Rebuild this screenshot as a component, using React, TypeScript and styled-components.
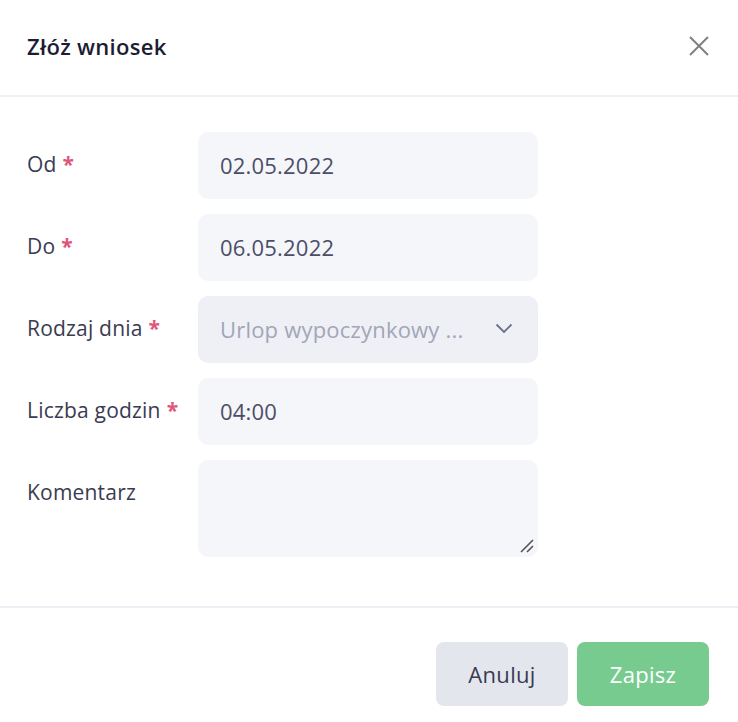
import React from "react";
import styled, { createGlobalStyle } from "styled-components";

const Global = createGlobalStyle`
  html, body { margin: 0; padding: 0; background: #ffffff; }
  body { font-family: "Open Sans", "Noto Sans", sans-serif; }
  * { box-sizing: border-box; }
`;

const Modal = styled.div`
  width: 738px;
  background: #fff;
  display: flex;
  flex-direction: column;
`;

const Header = styled.div`
  height: 97px;
  padding: 0 28px 4px 27px;
  display: flex;
  align-items: center;
  justify-content: space-between;
  border-bottom: 2px solid #eeeff4;
`;

const Title = styled.h2`
  margin: 0;
  font-size: 22px;
  font-weight: 600;
  color: #1c1d33;
  letter-spacing: 0.3px;
`;

const CloseButton = styled.button`
  border: 0;
  background: none;
  padding: 0;
  width: 22px;
  height: 22px;
  display: flex;
  align-items: center;
  justify-content: center;
  cursor: pointer;
`;

const Body = styled.div`
  padding: 35px 0 49px 27px;
  display: flex;
  flex-direction: column;
  gap: 15px;
`;

const Row = styled.div`
  display: grid;
  grid-template-columns: 171px 340px;
  align-items: start;
`;

const Label = styled.label`
  padding-top: 19px;
  font-size: 21px;
  line-height: 26px;
  color: #3a3b52;
  font-weight: 500;
  letter-spacing: 0.2px;
  white-space: nowrap;
`;

const Req = styled.span`
  color: #e0567a;
  margin-left: 6px;
  font-weight: 700;
`;

const Field = styled.div<{ $muted?: boolean; $tall?: boolean }>`
  height: ${(p) => (p.$tall ? "97px" : "67px")};
  border-radius: 10px;
  background: ${(p) => (p.$muted ? "#eef0f5" : "#f5f6f9")};
  display: flex;
  align-items: ${(p) => (p.$tall ? "flex-end" : "center")};
  justify-content: space-between;
  padding: ${(p) => (p.$tall ? "0 4px 4px 22px" : "0 25px 2px 22px")};
  font-size: 22px;
  letter-spacing: 0.2px;
  color: ${(p) => (p.$muted ? "#a3a5b8" : "#4c4e68")};
  white-space: nowrap;
`;

const Footer = styled.div`
  border-top: 2px solid #eeeff4;
  padding: 34px 29px 36px;
  display: flex;
  justify-content: flex-end;
  gap: 9px;
`;

const Button = styled.button<{ $primary?: boolean }>`
  width: 132px;
  height: 64px;
  border: 0;
  border-radius: 8px;
  font-family: inherit;
  font-size: 22px;
  font-weight: 500;
  letter-spacing: 0.3px;
  background: ${(p) => (p.$primary ? "#78cb8f" : "#e4e6ee")};
  color: ${(p) => (p.$primary ? "#ffffff" : "#3a3b52")};
`;

const rows: { label: string; value: string; required: boolean }[] = [
  { label: "Od", value: "02.05.2022", required: true },
  { label: "Do", value: "06.05.2022", required: true },
];

export default function App() {
  return (
    <>
      <Global />
      <Modal>
        <Header>
          <Title>Złóż wniosek</Title>
          <CloseButton aria-label="close">
            <svg width="22" height="22" viewBox="0 0 22 22">
              <path d="M2 2 L20 20 M20 2 L2 20" stroke="#808080" strokeWidth="2" fill="none" />
            </svg>
          </CloseButton>
        </Header>
        <Body>
          {rows.map((r) => (
            <Row key={r.label}>
              <Label>
                {r.label}
                {r.required && <Req>*</Req>}
              </Label>
              <Field>{r.value}</Field>
            </Row>
          ))}
          <Row>
            <Label>
              Rodzaj dnia<Req>*</Req>
            </Label>
            <Field $muted>
              <span>Urlop wypoczynkowy ...</span>
              <svg width="18" height="11" viewBox="0 0 18 11">
                <path d="M1.5 1.5 L9 9 L16.5 1.5" stroke="#6e7088" strokeWidth="1.8" fill="none" />
              </svg>
            </Field>
          </Row>
          <Row>
            <Label>
              Liczba godzin<Req>*</Req>
            </Label>
            <Field>04:00</Field>
          </Row>
          <Row>
            <Label>Komentarz</Label>
            <Field $tall>
              <span />
              <svg width="14" height="14" viewBox="0 0 14 14">
                <path d="M1 13 L13 1 M7 13 L13 7" stroke="#555" strokeWidth="1.6" fill="none" />
              </svg>
            </Field>
          </Row>
        </Body>
        <Footer>
          <Button>Anuluj</Button>
          <Button $primary>Zapisz</Button>
        </Footer>
      </Modal>
    </>
  );
}
